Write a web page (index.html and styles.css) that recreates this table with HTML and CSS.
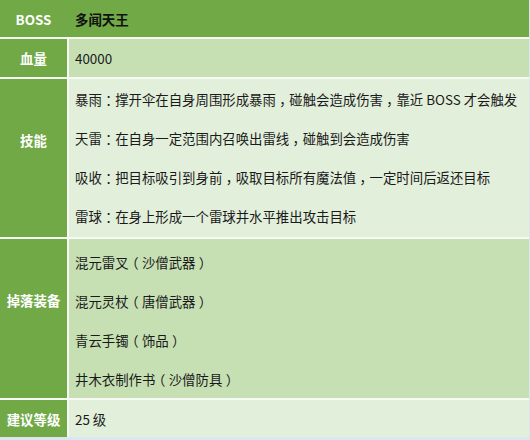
FILE: index.html
```html
<!DOCTYPE html>
<html lang="zh-Hans">
<head>
<meta charset="utf-8">
<link rel="stylesheet" href="styles.css">
</head>
<body>
<div class="table">
  <div class="head">
    <div class="label">BOSS</div>
    <div class="value">多闻天王</div>
  </div>
  <div class="label r-hp">血量</div>
  <div class="value dark r-hp">40000</div>
  <div class="label multi">技能</div>
  <div class="value light list">
    <div>暴雨<span class="p">：</span>撑开伞在自身周围形成暴雨<span class="p">，</span>碰触会造成伤害<span class="p">，</span>靠近 BOSS 才会触发</div>
    <div>天雷<span class="p">：</span>在自身一定范围内召唤出雷线<span class="p">，</span>碰触到会造成伤害</div>
    <div>吸收<span class="p">：</span>把目标吸引到身前<span class="p">，</span>吸取目标所有魔法值<span class="p">，</span>一定时间后返还目标</div>
    <div>雷球<span class="p">：</span>在身上形成一个雷球并水平推出攻击目标</div>
  </div>
  <div class="label multi">掉落装备</div>
  <div class="value dark list drops">
    <div>混元雷叉<span class="p">（</span>沙僧武器<span class="p">）</span></div>
    <div>混元灵杖<span class="p">（</span>唐僧武器<span class="p">）</span></div>
    <div>青云手镯<span class="p">（</span>饰品<span class="p">）</span></div>
    <div>井木衣制作书<span class="p">（</span>沙僧防具<span class="p">）</span></div>
  </div>
  <div class="label">建议等级</div>
  <div class="value light">25 级</div>
</div>
</body>
</html>
```

FILE: styles.css
```css
html, body {
  margin: 0;
  padding: 0;
  background: #dce6f1;
}
body {
  font-family: "Noto Sans CJK SC", "Noto Sans", sans-serif;
  font-size: 13.4px;
  color: #1a1a1a;
}
.table {
  width: 529px;
  display: grid;
  grid-template-columns: 67px 1fr;
  grid-template-rows: 37px 38px 158px 159px 37px;
  gap: 2px;
  background: #f7f9f4;
}
.head {
  grid-column: 1 / 3;
  display: grid;
  grid-template-columns: 67px 1fr;
  column-gap: 2px;
  background: #70a946;
}
.head .value {
  font-weight: bold;
  color: #111;
}
.label {
  background: #70a946;
  color: #fff;
  font-weight: bold;
  display: flex;
  align-items: center;
  justify-content: center;
}
.label.multi {
  padding-bottom: 37px;
}
.value {
  display: flex;
  align-items: center;
  padding-left: 6px;
}
.dark { background: #c6e0b4; }
.light { background: #e2efda; }
.list {
  flex-direction: column;
  align-items: flex-start;
  justify-content: center;
}
.list div {
  line-height: 39px;
}
.drops {
  padding-top: 4px;
}
.p {
  font-feature-settings: "halt";
  margin: 0 0.25em;
}
```
